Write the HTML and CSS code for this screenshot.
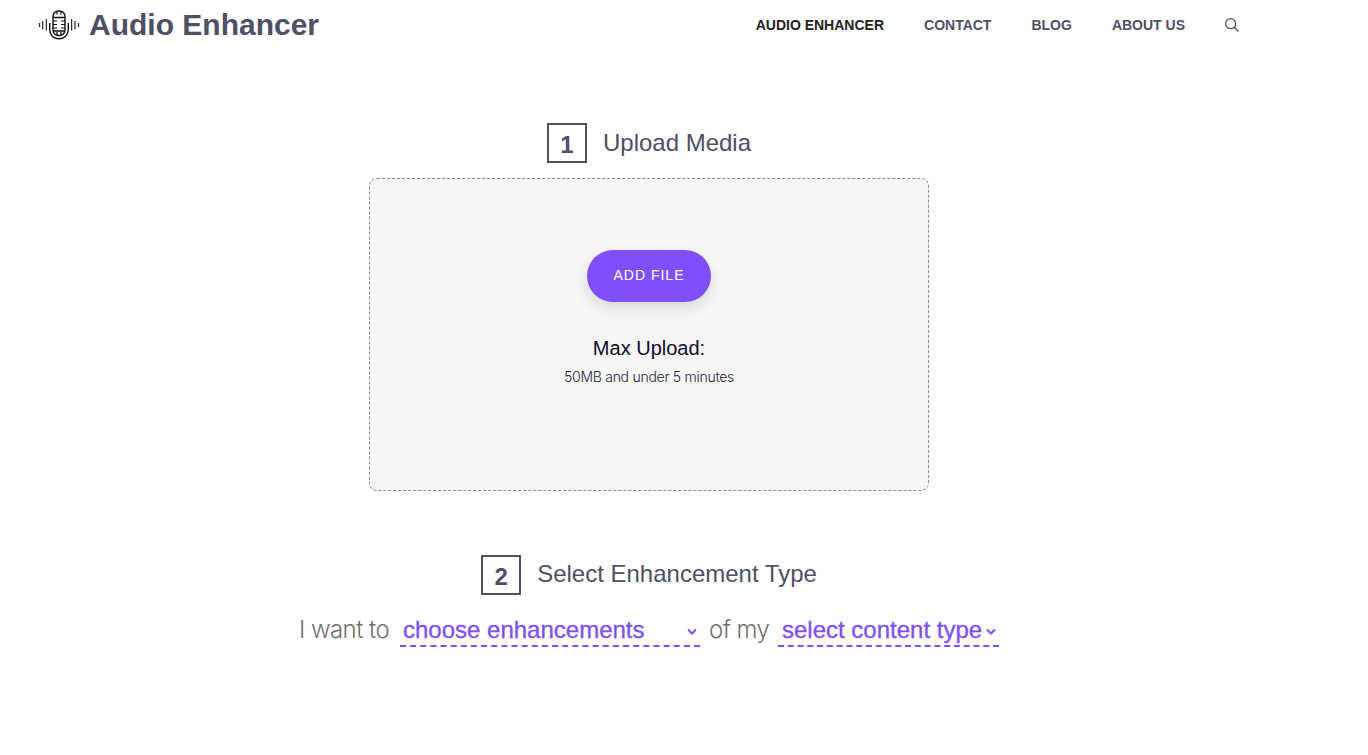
FILE: index.html
```
<!DOCTYPE html>
<html lang="en">
<head>
<meta charset="utf-8">
<title>Audio Enhancer</title>
<link rel="stylesheet" href="styles.css">
</head>
<body>
<header class="header">
  <a class="brand">
    <svg class="logo" width="42" height="32" viewBox="0 0 42 32" fill="none" stroke="#111" stroke-width="1.4">
      <rect x="15" y="2" width="12" height="24.500" rx="5.5"/>
      <path d="M11.700 14v6.500c0 5.500 4 9.200 9.300 9.200s9.300-3.700 9.300-9.200V14"/>
      <path d="M15 8.500h12M15 22h12M19 2.500V5.500M23 2.500V5.500M19 23v3M23 23v3" stroke-width="1.300"/>
      <path d="M15 12h4M15 15.500h4M15 19h4M23 12h4M23 15.500h4M23 19h4" stroke-width="1.200"/>
      <path d="M1.500 14v4M4.700 12v8.500M33.600 10v11.500M37 12v8.500M40.500 14v4M8.400 10v11.500" stroke="#333" stroke-width="1.300"/>
    </svg>
    <span class="brand-name">Audio Enhancer</span>
  </a>
  <nav class="nav">
    <a class="nav-link current">AUDIO ENHANCER</a>
    <a class="nav-link">CONTACT</a>
    <a class="nav-link">BLOG</a>
    <a class="nav-link">ABOUT US</a>
    <svg class="search" width="14" height="14" viewBox="0 0 14 14" fill="none" stroke="#4f4f65" stroke-width="1.300"><circle cx="5.700" cy="5.700" r="5"/><path d="M9.300 9.300l4.200 4.200"/></svg>
  </nav>
</header>
<main class="main">
  <h2 class="step"><span class="number">1</span><span class="step-title">Upload Media</span></h2>
  <section class="dropzone">
    <button class="add">ADD FILE</button>
    <p class="max">Max Upload:</p>
    <p class="limit">50MB and under 5 minutes</p>
  </section>
  <h2 class="step second"><span class="number">2</span><span class="step-title">Select Enhancement Type</span></h2>
  <div class="sentence">
    <span class="words want">I want to</span>
    <div class="picker enhancements"><span>choose enhancements</span><svg class="chevron" width="10" height="8" viewBox="0 0 10 8"><path d="M1 1.500l4 4 4-4"/></svg></div>
    <span class="words of">of my</span>
    <div class="picker content"><span>select content type</span><svg class="chevron" width="10" height="8" viewBox="0 0 10 8"><path d="M1 1.500l4 4 4-4"/></svg></div>
  </div>
</main>
</body>
</html>
```
FILE: styles.css
```
* { box-sizing: border-box; }
body { margin: 0; background: #fff; color: #4f4f65; font-family: "Liberation Sans", Arial, sans-serif; }
.header { display: flex; justify-content: space-between; align-items: center; height: 50px; padding: 0 129px 0 38px; }
.brand { display: flex; align-items: center; gap: 9px; }
.brand-name { font-size: 30px; line-height: 34px; font-weight: 700; }
.nav { display: flex; align-items: center; gap: 40px; }
.nav-link { font-size: 14px; line-height: 18px; font-weight: 700; }
.current { color: #222; }
.main { display: flex; flex-direction: column; align-items: center; width: 1298px; padding-top: 73px; }
.step { display: flex; gap: 16px; height: 40px; margin: 0; font-size: 24px; line-height: 40px; font-weight: 400; }
.number { width: 40px; height: 40px; border: 2px solid #4f4f65; line-height: 40px; text-align: center; font-weight: 700; }
.dropzone { display: flex; flex-direction: column; align-items: center; width: 560px; height: 313px; margin-top: 15px; padding-top: 71px; border: 1px dashed #8b8b8b; border-radius: 8px; background: #f6f6f6; }
.add { width: 124px; height: 52px; padding: 0 0 2px; border: 0; border-radius: 26px; background: #8050ff; color: #fff; font: 14px/50px "Liberation Sans", Arial, sans-serif; letter-spacing: 1px; box-shadow: 0 6px 14px rgba(0, 0, 0, .12); }
.max { margin: 34px 0 0; color: #0e0e29; font-size: 20px; line-height: 24px; }
.limit { margin: 7px 0 0; color: #262640; font: 300 14px/20px Inter, "Liberation Sans", sans-serif; letter-spacing: -.27px; white-space: nowrap; }
.second { margin-top: 64px; }
.second .step-title { line-height: 38px; }
.sentence { display: flex; width: 700px; height: 36px; margin-top: 16px; font-size: 24px; line-height: 38px; white-space: nowrap; }
.words { flex: none; color: #707070; font-family: Inter, "Liberation Sans", sans-serif; font-weight: 300; letter-spacing: -.55px; }
.want { width: 101px; }
.of { width: 69px; margin-left: 9px; }
.picker { display: flex; flex: none; justify-content: space-between; align-items: center; height: 36px; padding: 4px 3px 0; border-bottom: 2px dashed #8050ff; color: #8050ff; line-height: 30px; -webkit-text-stroke: .35px #8050ff; }
.enhancements { width: 300px; }
.content { width: 221px; padding-left: 4px; }
.chevron { flex: none; margin-top: 3px; fill: none; stroke: #8050ff; stroke-width: 2.2; }
```
